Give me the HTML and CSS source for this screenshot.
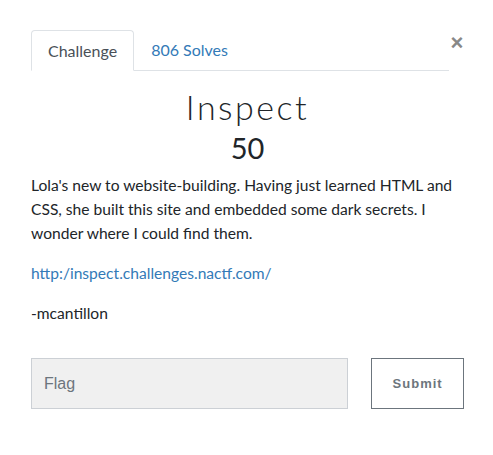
FILE: index.html
```html
<!DOCTYPE html>
<html>
<head>
<meta charset="utf-8">
<link rel="stylesheet" href="styles.css">
</head>
<body>
<div class="modal">
  <div class="head">
    <ul class="tabs">
      <li class="tab active">Challenge</li>
      <li class="tab link">806 Solves</li>
    </ul>
    <button class="close" aria-label="Close">&times;</button>
  </div>
  <h2 class="title">Inspect</h2>
  <h3 class="value">50</h3>
  <div class="desc">
    <p>Lola's new to website-building. Having just learned HTML and CSS, she built this site and embedded some dark secrets. I wonder where I could find them.</p>
    <p><a href="#">http:/inspect.challenges.nactf.com/</a></p>
    <p>-mcantillon</p>
  </div>
  <form class="submit-row">
    <input class="flag" type="text" placeholder="Flag">
    <button class="submit" type="button">Submit</button>
  </form>
</div>
</body>
</html>
```
FILE: styles.css
```css
html, body { margin: 0; padding: 0; background: #fff; }
body { font-family: Lato, "Liberation Sans", sans-serif; color: #212529; }
.modal { padding: 30px 29px 0 31px; }
.head { display: flex; align-items: flex-start; }
.tabs { list-style: none; margin: 0; padding: 0; display: flex; border-bottom: 1px solid #dee2e6; width: 420px; }
.tab { font-size: 16px; height: 41px; box-sizing: border-box; padding: 10px 16px 0; margin-bottom: -1px; }
.tab.active { border: 1px solid #dee2e6; border-bottom-color: #fff; border-radius: 4px 4px 0 0; color: #495057; }
.tab.link { color: #337ab7; padding-left: 17px; }
.close { border: 0; background: none; padding: 0; margin: 2px 0 0 1px; font-family: "Liberation Sans", Arial, sans-serif; font-size: 22px; font-weight: bold; line-height: 22px; color: #888; width: 14px; }
.title { text-align: center; font-family: Lato, sans-serif; font-weight: 300; font-size: 34px; letter-spacing: 2.5px; margin: 16px 0 0; line-height: 40px; color: #212529; }
.value { text-align: center; font-weight: 400; font-size: 29px; margin: 4px 0 0; line-height: 34px; color: #212529; }
.desc { font-size: 15.6px; line-height: 24px; margin-top: 8px; width: 440px; }
.desc p { margin: 0 0 16px; }
.desc a { color: #337ab7; text-decoration: none; }
.submit-row { display: flex; gap: 23px; margin-top: 33px; }
.flag { width: 318px; height: 51px; box-sizing: border-box; background: #f0f0f0; border: 1px solid #ccd0d5; padding: 0 12px; font-family: "Liberation Sans", Arial, sans-serif; font-size: 16px; color: #495057; }
.flag::placeholder { color: #6c757d; }
.submit { width: 93px; height: 51px; box-sizing: border-box; background: #fff; border: 1px solid #6c757d; font-family: "Liberation Sans", Arial, sans-serif; font-weight: bold; font-size: 13px; letter-spacing: 1px; color: #6c757d; }
```
